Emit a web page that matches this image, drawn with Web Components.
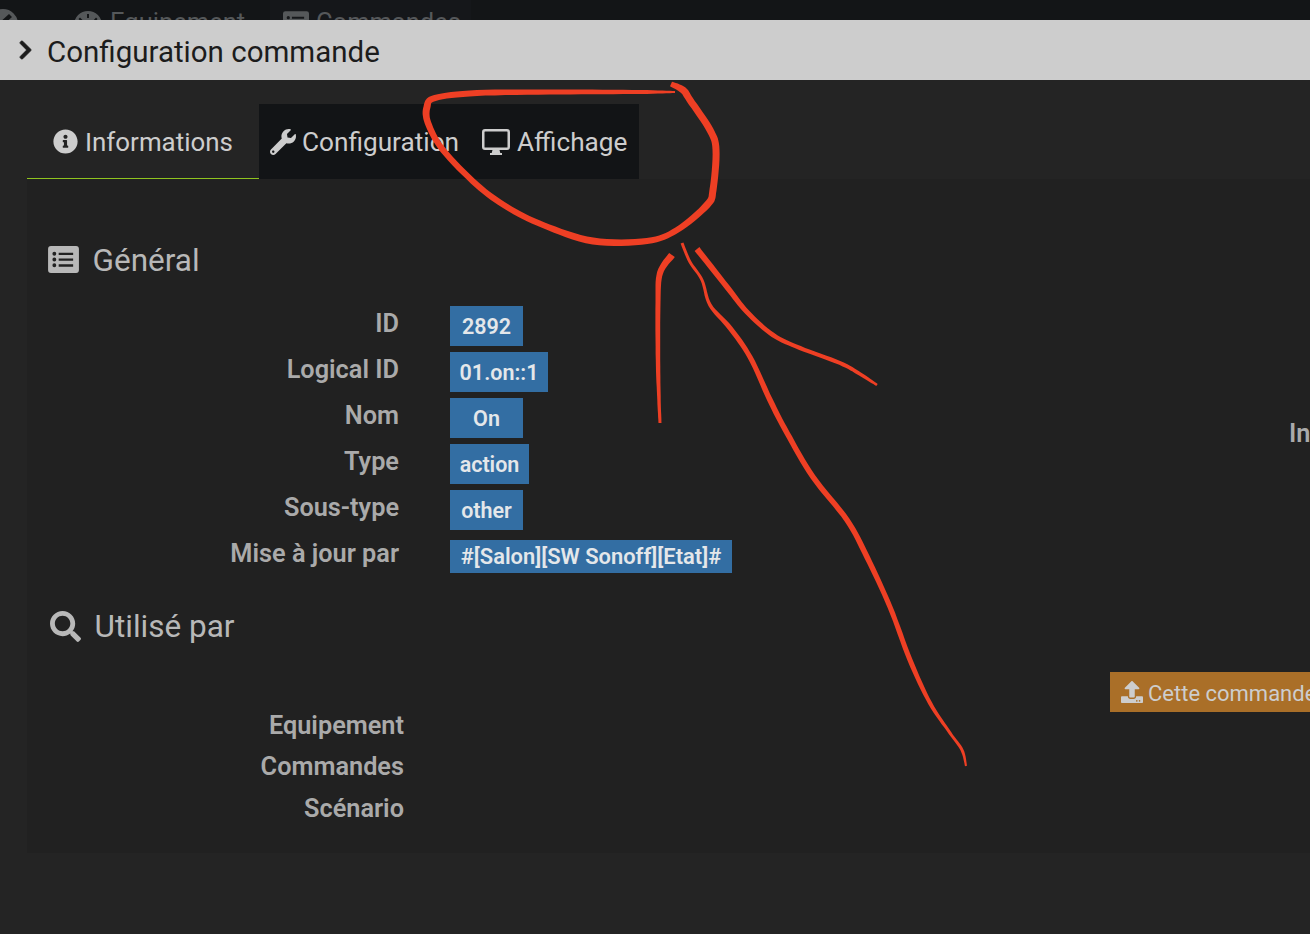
<!DOCTYPE html>
<html lang="fr">
<head>
<meta charset="utf-8">
<title>Configuration commande</title>
<style>
  html, body { margin: 0; height: 100%; background: #242424; overflow: hidden; font-family: Roboto, "Liberation Sans", sans-serif; }
</style>
</head>
<body>
<top-strip></top-strip>
<panel-title>Configuration commande</panel-title>
<config-card>
  <tab-item slot="tabs" icon="info" active width="232">Informations</tab-item>
  <tab-item slot="tabs" icon="wrench" width="212">Configuration</tab-item>
  <tab-item slot="tabs" icon="desktop" width="168">Affichage</tab-item>

  <section-title icon="list" style="margin-top:56px">Général</section-title>
  <form-row label="ID" style="margin-top:21px"><value-badge width="73">2892</value-badge></form-row>
  <form-row label="Logical ID"><value-badge width="98">01.on::1</value-badge></form-row>
  <form-row label="Nom"><value-badge width="73">On</value-badge></form-row>
  <form-row label="Type"><value-badge width="79">action</value-badge></form-row>
  <form-row label="Sous-type"><value-badge width="73">other</value-badge></form-row>
  <form-row label="Mise à jour par"><value-badge width="282" short>#[Salon][SW Sonoff][Etat]#</value-badge></form-row>

  <section-title icon="search" style="margin-top:19px">Utilisé par</section-title>
  <form-row label="Equipement" wide style="margin-top:57px"></form-row>
  <form-row label="Commandes" wide></form-row>
  <form-row label="Scénario" wide></form-row>

  <div slot="side" style="margin:238px 0 0 179px;font:600 25.3px/34px Roboto,sans-serif;color:#aaa">In</div>
  <action-button slot="side" style="margin-top:221px">Cette commande</action-button>
</config-card>
<red-marks></red-marks>

<script>
const ICONS = {
  info: ['0 0 512 512', 'M256 8C119.043 8 8 119.083 8 256c0 136.997 111.043 248 248 248s248-111.003 248-248C504 119.083 392.957 8 256 8zm0 110c23.196 0 42 18.804 42 42s-18.804 42-42 42-42-18.804-42-42 18.804-42 42-42zm56 254c0 6.627-5.373 12-12 12h-88c-6.627 0-12-5.373-12-12v-24c0-6.627 5.373-12 12-12h12v-64h-12c-6.627 0-12-5.373-12-12v-24c0-6.627 5.373-12 12-12h64c6.627 0 12 5.373 12 12v100h12c6.627 0 12 5.373 12 12v24z'],
  wrench: ['0 0 512 512', 'M507.73 109.1c-2.24-9.03-13.54-12.09-20.12-5.51l-74.36 74.36-67.88-11.31-11.31-67.88 74.36-74.36c6.62-6.62 3.43-17.9-5.66-20.16-47.38-11.74-99.55.91-136.58 37.93-39.64 39.64-50.55 97.1-34.05 147.2L18.74 402.76c-24.99 24.99-24.99 65.51 0 90.5 24.99 24.99 65.51 24.99 90.5 0l213.21-213.21c50.12 16.71 107.47 5.68 147.37-34.22 37.07-37.07 49.7-89.32 37.91-136.73zM64 472c-13.25 0-24-10.75-24-24 0-13.26 10.75-24 24-24s24 10.74 24 24c0 13.25-10.75 24-24 24z'],
  search: ['0 0 512 512', 'M505 442.7L405.3 343c-4.5-4.5-10.6-7-17-7H372c27.6-35.3 44-79.7 44-128C416 93.1 322.9 0 208 0S0 93.1 0 208s93.1 208 208 208c48.3 0 92.7-16.4 128-44v16.3c0 6.4 2.5 12.5 7 17l99.7 99.7c9.4 9.4 24.6 9.4 33.9 0l28.3-28.3c9.4-9.4 9.4-24.6.1-34zM208 336c-70.7 0-128-57.2-128-128 0-70.7 57.2-128 128-128 70.7 0 128 57.2 128 128 0 70.7-57.2 128-128 128z'],
  upload: ['0 0 512 512', 'M296 384h-80c-13.3 0-24-10.7-24-24V192h-87.7c-17.8 0-26.7-21.5-14.1-34.1L242.3 5.7c7.5-7.5 19.8-7.5 27.3 0l152.2 152.2c12.6 12.6 3.7 34.1-14.1 34.1H320v168c0 13.3-10.7 24-24 24zm216-8v112c0 13.3-10.7 24-24 24H24c-13.3 0-24-10.7-24-24V376c0-13.3 10.7-24 24-24h136v8c0 30.9 25.1 56 56 56h80c30.9 0 56-25.1 56-56v-8h136c13.3 0 24 10.7 24 24zm-124 88c0-11-9-20-20-20s-20 9-20 20 9 20 20 20 20-9 20-20zm64 0c0-11-9-20-20-20s-20 9-20 20 9 20 20 20 20-9 20-20z'],
  chevron: ['30 40 260 432', 'M285.476 272.971L91.132 467.314c-9.373 9.373-24.569 9.373-33.941 0l-22.667-22.667c-9.357-9.357-9.375-24.522-.04-33.901L188.505 256 34.484 101.255c-9.335-9.379-9.317-24.544.04-33.901l22.667-22.667c9.373-9.373 24.569-9.373 33.941 0L285.475 239.03c9.373 9.372 9.373 24.568.001 33.941z'],
  list: ['0 0 32 28', 'M3 0h26a3 3 0 0 1 3 3v22a3 3 0 0 1-3 3H3a3 3 0 0 1-3-3V3a3 3 0 0 1 3-3zM6.500 6a2 2 0 1 0 0 4 2 2 0 0 0 0-4zm0 6a2 2 0 1 0 0 4 2 2 0 0 0 0-4zm0 6a2 2 0 1 0 0 4 2 2 0 0 0 0-4zM11 7v2.400h15V7zm0 6v2.400h15V13zm0 6v2.400h15V19z'],
  desktop: ['0 0 28 26', 'M3 0h22a3 3 0 0 1 3 3v15a3 3 0 0 1-3 3h-7.500l.8 3H20v2H8v-2h1.700l.8-3H3a3 3 0 0 1-3-3V3a3 3 0 0 1 3-3zm0 2.500a.5.5 0 0 0-.5.5v15a.5.5 0 0 0 .5.5h22a.5.5 0 0 0 .5-.5V3a.5.5 0 0 0-.5-.5z'],
  dial: ['0 0 28 28', 'M14 0a14 14 0 1 1 0 28a14 14 0 0 1 0-28zM13 3v4h2V3zM6 6.500l-1.500 1.500 3 3 1.500-1.500zm16 0l-5 6 1.500 1.500 5-6z'],
  back: ['0 0 30 30', 'M15 0a15 15 0 1 1 0 30a15 15 0 0 1 0-30zM21 5l-11 10 3 3 11-10z']
};
const icon = (name, w, h) => `<svg width="${w}" height="${h}" viewBox="${ICONS[name][0]}" fill="currentColor" fill-rule="evenodd" style="display:block;flex:none"><path d="${ICONS[name][1]}"/></svg>`;

// bandeau du haut, coupé par le titre
class TopStrip extends HTMLElement {
  connectedCallback() {
    this.attachShadow({ mode: 'open' }).innerHTML = `
      <style>
        :host { display: flex; height: 20px; overflow: hidden; background: #131517; color: #55585a; font: 400 25.5px/34px Roboto, sans-serif; }
        .back { width: 270px; display: flex; }
        .back svg:first-child { margin: 9px 0 0 -12px; }
        .back svg:nth-child(2) { margin: 11px 8px 0 56px; }
        .tab { display: flex; padding: 11px 0 0 13px; background: #15171a; width: 201px; box-sizing: border-box; }
        .tab svg { margin-right: 7px; }
        span { margin-top: 5px; }
        .tab span { margin-top: -6px; }
      </style>
      <div class="back">${icon('back', 30, 30)}${icon('dial', 28, 28)}<span>Equipement</span></div>
      <div class="tab">${icon('list', 26, 23)}<span>Commandes</span></div>`;
  }
}
customElements.define('top-strip', TopStrip);

class PanelTitle extends HTMLElement {
  connectedCallback() {
    this.attachShadow({ mode: 'open' }).innerHTML = `
      <style>
        :host { display: flex; align-items: center; gap: 15px; box-sizing: border-box; height: 60px; padding: 3px 0 0 19px; background: #cdcdcd; color: #1c1c1c; font: 400 29.500px/40px Roboto, sans-serif; }
        svg { margin-top: -3px; stroke: currentColor; stroke-width: 22px; overflow: visible; }
      </style>
      ${icon('chevron', 13, 18)}<slot></slot>`;
  }
}
customElements.define('panel-title', PanelTitle);

class ConfigCard extends HTMLElement {
  connectedCallback() {
    this.attachShadow({ mode: 'open' }).innerHTML = `
      <style>
        :host { display: block; height: 749px; margin: 24px 0 0 27px; background: #212121; overflow: hidden; }
        .tabs { display: flex; height: 75px; background: #242424; }
        .content { display: grid; grid-template-columns: 1083px 200px; }
        .side { white-space: nowrap; overflow: hidden; }
      </style>
      <div class="tabs"><slot name="tabs"></slot></div>
      <div class="content">
        <div class="main"><slot></slot></div>
        <div class="side"><slot name="side"></slot></div>
      </div>`;
  }
}
customElements.define('config-card', ConfigCard);

class TabItem extends HTMLElement {
  connectedCallback() {
    const active = this.hasAttribute('active');
    const name = this.getAttribute('icon');
    const size = { info: [25, 25], wrench: [26, 26], desktop: [28, 26] }[name];
    this.attachShadow({ mode: 'open' }).innerHTML = `
      <style>
        :host { display: flex; align-items: center; box-sizing: border-box; height: 75px; width: ${this.getAttribute('width')}px;
          gap: ${active ? 7 : name === 'desktop' ? 7 : 6}px; padding-left: ${active ? 26 : 11}px; white-space: nowrap;
          background: ${active ? '#242424' : '#121416'}; color: #cdcdcd; font: 400 ${active ? 25.9 : 26.2}px/34px Roboto, sans-serif;
          ${active ? 'box-shadow: inset 0 -1px 0 #8fc31f;' : ''} }
      </style>
      ${icon(name, size[0], size[1])}<slot></slot>`;
  }
}
customElements.define('tab-item', TabItem);

class SectionTitle extends HTMLElement {
  connectedCallback() {
    const name = this.getAttribute('icon');
    this.attachShadow({ mode: 'open' }).innerHTML = `
      <style>
        :host { display: flex; align-items: center; height: 50px; padding-left: ${name === 'list' ? 21 : 23}px; gap: 13.5px; color: #b8b8b8; font: 400 31.5px/40px Roboto, sans-serif; }
        span { padding-top: 2px; }
        svg { margin-top: ${name === 'list' ? -2 : 0}px; }
      </style>
      ${name === 'list' ? icon('list', 31, 27) : icon('search', 31, 31)}<span><slot></slot></span>`;
  }
}
customElements.define('section-title', SectionTitle);

class FormRow extends HTMLElement {
  connectedCallback() {
    const wide = this.hasAttribute('wide');
    this.attachShadow({ mode: 'open' }).innerHTML = `
      <style>
        :host { display: grid; grid-template-columns: ${wide ? 377 : 372}px 1fr; column-gap: 51px; height: ${wide ? 41.4 : 46}px; }
        label { padding-top: 1px; text-align: right; color: #aaa; font: 600 25.3px/34px Roboto, sans-serif; white-space: nowrap; }
      </style>
      <label>${this.getAttribute('label')}</label><div><slot></slot></div>`;
  }
}
customElements.define('form-row', FormRow);

class ValueBadge extends HTMLElement {
  connectedCallback() {
    const short = this.hasAttribute('short');
    this.attachShadow({ mode: 'open' }).innerHTML = `
      <style>
        :host { display: flex; align-items: center; justify-content: center; box-sizing: border-box; width: ${this.getAttribute('width')}px;
          padding-top: ${short ? 0 : 2}px; height: ${short ? 33 : 40}px; ${short ? 'margin-top: 4px;' : ''} background: #336ea3; color: #e4e7ea; font: 600 ${short ? 21.9 : 21.5}px/30px Roboto, sans-serif; white-space: nowrap; }
      </style>
      <slot></slot>`;
  }
}
customElements.define('value-badge', ValueBadge);

class ActionButton extends HTMLElement {
  connectedCallback() {
    this.attachShadow({ mode: 'open' }).innerHTML = `
      <style>
        :host { display: flex; align-items: center; gap: 5px; height: 40px; padding-left: 11px; background: #aa6f28; color: #cdcdcd; font: 400 22px/30px Roboto, sans-serif; white-space: nowrap; }
        span { padding-top: 3px; }
      </style>
      ${icon('upload', 22, 22)}<span><slot></slot></span>`;
  }
}
customElements.define('action-button', ActionButton);

// traits rouges dessinés à la main par dessus la capture
// chaque trait : liste de [x, y, épaisseur], lissée puis remplie
const MARKS = [
  [[671,84,5],[683,90,7],[690,100,7],[710,130,7],[716,150,7],[713,190,7],[707,205,7],[677,230,6],[647,241,6],[593,241,7],[543,225,6],[507,207,6],[477,185,6],[443,150,6],[428,123,6.500],[427,107,7],[435,98,6],[477,93,6],[560,92,5],[640,92,4],[675,92,2]],
  [[672,255,7],[660,273,6],[658,303,5],[658,360,4.500],[659,400,3.500],[660,423,3]],
  [[682,243,3],[690,262,3],[702,280,3],[710,305,3.500],[730,328,5],[750,357,5],[770,400,5.500],[787,433,5.500],[813,477,5.500],[847,520,5.500],[867,557,5.500],[890,607,5],[910,660,5],[930,703,4],[950,733,3],[962,750,3],[966,766,2]],
  [[697,249,6],[727,287,5.500],[747,312,5],[773,335,4.500],[800,348,4],[840,363,4],[860,374,3.500],[877,385,2.500]]
];

function ribbon(points) {
  const samples = [];
  for (let i = 0; i < points.length - 1; i++) {
    const p0 = points[Math.max(i - 1, 0)], p1 = points[i], p2 = points[i + 1], p3 = points[Math.min(i + 2, points.length - 1)];
    for (let s = 0; s < 8; s++) {
      const t = s / 8;
      samples.push([0, 1, 2].map(k => 0.5 * (2 * p1[k] + (p2[k] - p0[k]) * t + (2 * p0[k] - 5 * p1[k] + 4 * p2[k] - p3[k]) * t * t + (3 * p1[k] - p0[k] - 3 * p2[k] + p3[k]) * t * t * t)));
    }
  }
  samples.push(points[points.length - 1]);
  const left = [], right = [];
  samples.forEach((p, i) => {
    const a = samples[Math.max(i - 1, 0)], b = samples[Math.min(i + 1, samples.length - 1)];
    const len = Math.hypot(b[0] - a[0], b[1] - a[1]) || 1;
    const nx = (a[1] - b[1]) / len * p[2] / 2, ny = (b[0] - a[0]) / len * p[2] / 2;
    left.push((p[0] + nx).toFixed(1) + ' ' + (p[1] + ny).toFixed(1));
    right.unshift((p[0] - nx).toFixed(1) + ' ' + (p[1] - ny).toFixed(1));
  });
  return 'M' + left.concat(right).join('L') + 'Z';
}

class RedMarks extends HTMLElement {
  connectedCallback() {
    this.attachShadow({ mode: 'open' }).innerHTML = `
      <style>
        :host { position: absolute; left: 0; top: 0; width: 1310px; height: 934px; pointer-events: none; }
      </style>
      <svg width="1310" height="934" fill="#ee3f24">${MARKS.map(m => `<path d="${ribbon(m)}"/>`).join('')}</svg>`;
  }
}
customElements.define('red-marks', RedMarks);
</script>
</body>
</html>
